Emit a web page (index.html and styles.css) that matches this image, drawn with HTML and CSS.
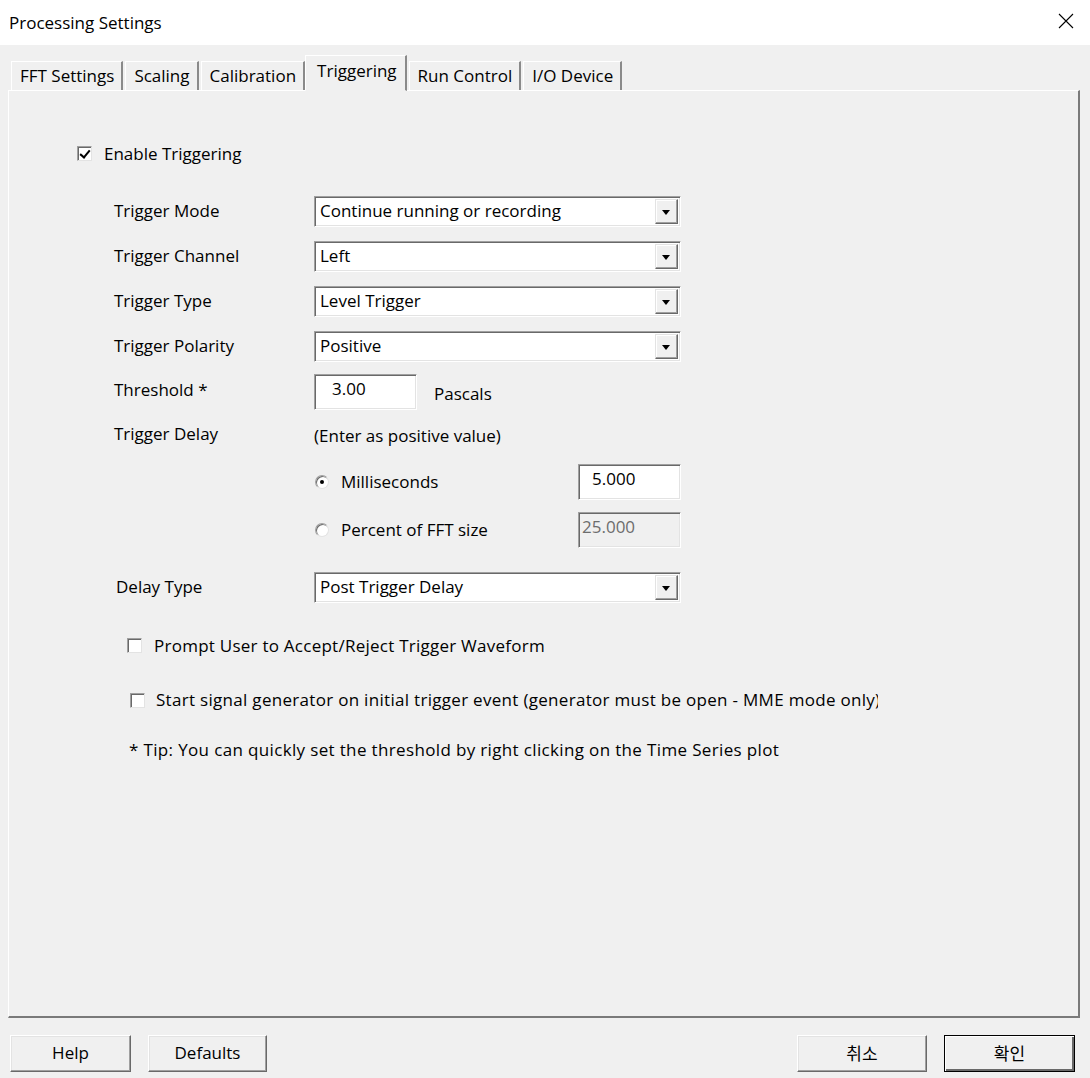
FILE: index.html
```html
<!DOCTYPE html>
<html lang="en">
<head>
    <meta charset="UTF-8">
    <title>Processing Settings</title>
    <link rel="stylesheet" href="styles.css">
</head>
<body>
    <div class="window">
        <div class="titlebar">
            <span class="title">Processing Settings</span>
            <span class="close">
                <svg width="16" height="16" viewBox="0 0 16 16"><path d="M1 1 L15 15 M15 1 L1 15" stroke="#000" stroke-width="1.1" fill="none"/></svg>
            </span>
        </div>

        <div class="dialog">
            <div class="tabs">
                <div class="tab">FFT Settings</div>
                <div class="tab">Scaling</div>
                <div class="tab">Calibration</div>
                <div class="tab active">Triggering</div>
                <div class="tab">Run Control</div>
                <div class="tab">I/O Device</div>
            </div>

            <div class="panel">
                <label class="check enable">
                    <span class="box checked"></span>Enable Triggering
                </label>

                <div class="form">
                    <div class="row">
                        <span class="label">Trigger Mode</span>
                        <div class="combo"><span class="value">Continue running or recording</span><span class="drop"></span></div>
                    </div>
                    <div class="row">
                        <span class="label">Trigger Channel</span>
                        <div class="combo"><span class="value">Left</span><span class="drop"></span></div>
                    </div>
                    <div class="row">
                        <span class="label">Trigger Type</span>
                        <div class="combo"><span class="value">Level Trigger</span><span class="drop"></span></div>
                    </div>
                    <div class="row">
                        <span class="label">Trigger Polarity</span>
                        <div class="combo"><span class="value">Positive</span><span class="drop"></span></div>
                    </div>
                    <div class="row threshold">
                        <span class="label">Threshold *</span>
                        <div class="field small"><span class="edit pad-lg">3.00</span><span class="unit">Pascals</span></div>
                    </div>
                    <div class="row delay">
                        <span class="label">Trigger Delay</span>
                        <span class="hint">(Enter as positive value)</span>
                    </div>
                    <div class="row option ms">
                        <span class="label"></span>
                        <div class="radio-row">
                            <span class="radio on"></span><span class="radio-text">Milliseconds</span>
                            <span class="edit pad-md">5.000</span>
                        </div>
                    </div>
                    <div class="row option">
                        <span class="label"></span>
                        <div class="radio-row">
                            <span class="radio"></span><span class="radio-text">Percent of FFT size</span>
                            <span class="edit disabled">25.000</span>
                        </div>
                    </div>
                    <div class="row delay-type">
                        <span class="label">Delay Type</span>
                        <div class="combo"><span class="value">Post Trigger Delay</span><span class="drop"></span></div>
                    </div>
                </div>

                <label class="check prompt">
                    <span class="box"></span>Prompt User to Accept/Reject Trigger Waveform
                </label>
                <label class="check start">
                    <span class="box"></span><span class="clip">Start signal generator on initial trigger event (generator must be open - MME mode only)</span>
                </label>
                <p class="tip">* Tip: You can quickly set the threshold by right clicking on the Time Series plot</p>
            </div>

            <div class="buttons">
                <button class="btn help">Help</button>
                <button class="btn defaults">Defaults</button>
                <span class="spacer"></span>
                <button class="btn cancel">취소</button>
                <button class="btn ok">확인</button>
            </div>
        </div>
    </div>
</body>
</html>
```

FILE: styles.css
```css
* {
    margin: 0;
    padding: 0;
    box-sizing: border-box;
}

body {
    font-family: 'Open Sans', 'Noto Sans CJK KR', sans-serif;
    font-size: 17px;
    color: #000;
    background: #f0f0f0;
    width: 1090px;
    height: 1078px;
    overflow: hidden;
}

.titlebar {
    height: 45px;
    background: #fff;
    display: flex;
    align-items: center;
    justify-content: space-between;
    padding: 0 16px 0 9px;
}

.title {
    font-size: 17px;
    margin-top: -1px;
}

.close {
    display: flex;
    margin-top: -4px;
}

.dialog {
    background: #f0f0f0;
    height: 1033px;
    padding: 0 10px 0 8px;
}

/* tab strip */
.tabs {
    display: flex;
    padding: 10px 0 0 3px;
    height: 45px;
    align-items: flex-end;
    position: relative;
    z-index: 1;
}

.tab {
    height: 29px;
    line-height: 27px;
    padding: 0 7px 0 8px;
    border-top: 1px solid #fff;
    border-left: 1px solid #fff;
    border-right: 2px solid #8a8a8a;
    margin-right: 2px;
    white-space: nowrap;
}

.tab.active {
    height: 36px;
    line-height: 30px;
    padding: 0 8px 0 11px;
    margin: 0 2px 0 -2px;
    border-bottom: 1px solid #f0f0f0;
    margin-bottom: -1px;
    background: #f0f0f0;
}

.panel {
    height: 928px;
    border-top: 1px solid #fff;
    border-left: 1px solid #fff;
    border-right: 2px solid #7a7a7a;
    border-bottom: 2px solid #7a7a7a;
    padding-top: 51px;
}

/* checkboxes */
.check {
    display: flex;
    align-items: center;
    height: 22px;
    white-space: nowrap;
}

.box {
    width: 15px;
    height: 15px;
    flex: none;
    background: #fff;
    border-top: 1px solid #a0a0a0;
    border-left: 1px solid #a0a0a0;
    border-right: 1px solid #e3e3e3;
    border-bottom: 1px solid #e3e3e3;
    box-shadow: inset 1px 1px 0 #696969;
    margin-right: 12px;
    position: relative;
}

.box.checked::after {
    content: '';
    position: absolute;
    left: 4px;
    top: 1px;
    width: 4px;
    height: 8px;
    border-right: 2px solid #000;
    border-bottom: 2px solid #000;
    transform: rotate(40deg);
}

.enable {
    margin-left: 68px;
}

.prompt {
    margin: 31px 0 0 118px;
    letter-spacing: 0.25px;
}

.start {
    margin: 33px 0 0 121px;
}

.start .box {
    margin-right: 11px;
}

.clip {
    display: block;
    width: 722px;
    overflow: hidden;
    line-height: 22px;
    letter-spacing: 0.3px;
}

.tip {
    margin: 28px 0 0 120px;
    height: 22px;
    line-height: 22px;
    letter-spacing: 0.35px;
}

/* form rows */
.form {
    margin: 32px 0 0 105px;
}

.row {
    display: flex;
    align-items: center;
    height: 31px;
    margin-bottom: 14px;
}

.label {
    width: 200px;
    flex: none;
    margin-top: -3px;
}

.combo {
    width: 367px;
    height: 31px;
    display: flex;
    align-items: center;
    background: #fff;
    border-top: 1px solid #a0a0a0;
    border-left: 1px solid #a0a0a0;
    border-right: 1px solid #fff;
    border-bottom: 1px solid #fff;
    box-shadow: inset 1px 1px 0 #696969, inset -1px -1px 0 #e3e3e3;
    padding: 2px 2px 2px 5px;
}

.value {
    flex: 1;
    margin-top: -2px;
}

.drop {
    width: 23px;
    height: 25px;
    background: #f0f0f0;
    border-top: 1px solid #e3e3e3;
    border-left: 1px solid #e3e3e3;
    border-right: 1px solid #696969;
    border-bottom: 1px solid #696969;
    box-shadow: inset -1px -1px 0 #a0a0a0, inset 1px 1px 0 #fff;
    position: relative;
}

.drop::after {
    content: '';
    position: absolute;
    left: 6px;
    top: 10px;
    border-left: 4.5px solid transparent;
    border-right: 4.5px solid transparent;
    border-top: 5px solid #000;
}

.threshold {
    height: 36px;
    margin: -2px 0 0;
}

.threshold .label {
    margin-top: -5px;
}

.field {
    display: flex;
    align-items: center;
}

.edit {
    width: 103px;
    height: 36px;
    background: #fff;
    border-top: 1px solid #a0a0a0;
    border-left: 1px solid #a0a0a0;
    border-right: 1px solid #fff;
    border-bottom: 1px solid #fff;
    box-shadow: inset 1px 1px 0 #696969, inset -1px -1px 0 #e3e3e3;
    padding: 2px 4px 0;
    line-height: 24px;
}

.pad-lg {
    padding-left: 17px;
}

.pad-md {
    padding-left: 13px;
}

.edit.disabled {
    background: #f0f0f0;
    color: #6d6d6d;
    padding-left: 3px;
}

.unit {
    margin-left: 17px;
    margin-top: 2px;
}

.delay {
    height: 24px;
    margin: 13px 0 0;
}

.option {
    height: 36px;
    margin: 17px 0 0;
}

.option + .option {
    margin-top: 12px;
}

.radio-row {
    width: 367px;
    display: flex;
    align-items: center;
}

.radio {
    width: 14px;
    height: 14px;
    border-radius: 50%;
    background: #fff;
    border: 1px solid #a0a0a0;
    border-right-color: #e3e3e3;
    border-bottom-color: #e3e3e3;
    box-shadow: inset 1px 1px 0 #696969;
    margin: 0 12px 0 1px;
    position: relative;
}

.radio.on::after {
    content: '';
    position: absolute;
    left: 4px;
    top: 4px;
    width: 4px;
    height: 4px;
    border-radius: 50%;
    background: #000;
}

.radio-text {
    flex: 1;
    margin-top: -2px;
}

.delay-type {
    margin: 24px 0 0;
}

.delay-type .label {
    padding-left: 2px;
}

/* bottom buttons */
.buttons {
    display: flex;
    padding: 17px 5px 0 2px;
}

.spacer {
    flex: 1;
}

.btn {
    font-family: 'Open Sans', 'Noto Sans CJK KR', sans-serif;
    font-size: 17px;
    height: 37px;
    background: #f0f0f0;
    border-top: 1px solid #fff;
    border-left: 1px solid #fff;
    border-right: 1px solid #696969;
    border-bottom: 1px solid #696969;
    box-shadow: inset -1px -1px 0 #a0a0a0, inset 1px 1px 0 #e3e3e3;
    padding-bottom: 2px;
}

.help {
    width: 121px;
}

.defaults {
    width: 119px;
    margin-left: 17px;
}

.cancel {
    width: 130px;
}

.ok {
    width: 131px;
    margin-left: 17px;
    border: 1px solid #000;
    box-shadow: inset 1px 1px 0 #fff, inset -2px -2px 0 #696969;
}
```
